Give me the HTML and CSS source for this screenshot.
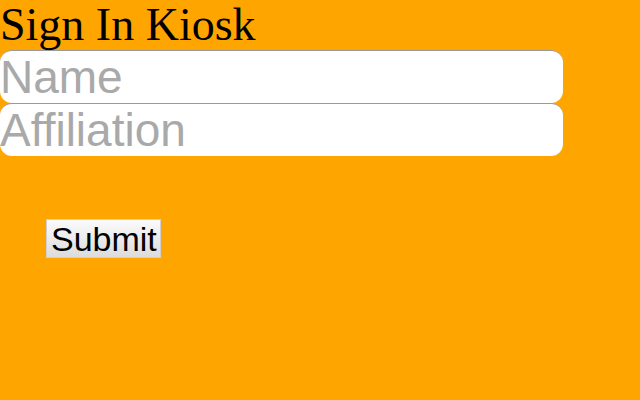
FILE: index.html
```html
<!DOCTYPE html>
<html lang="en">
<head>
  <meta charset="UTF-8" />
  <title>Sign In Kiosk</title>
  <link rel="stylesheet" href="styles.css">
</head>
<body>
  <div class="title">Sign In Kiosk</div>
  <form class="kiosk">
    <input type="text" name="name" placeholder="Name" />
    <input type="text" name="affiliation" placeholder="Affiliation" />
    <button type="button">Submit</button>
  </form>
</body>
</html>
```

FILE: styles.css
```css
body {
  margin: 0;
  background: #ffa500;
}
.title {
  font-family: "Liberation Serif", serif;
  font-size: 46px;
  line-height: 50px;
  color: #000;
}
.kiosk input {
  display: block;
  box-sizing: border-box;
  width: 563px;
  height: 53px;
  margin: 0;
  padding: 0;
  border: none;
  border-top: 1px solid #999;
  border-radius: 12px;
  background: #fff;
  font-family: "Liberation Sans", Arial, sans-serif;
  font-size: 46px;
  outline: none;
}
.kiosk input::placeholder {
  color: #a9a9a9;
}
.kiosk button {
  display: block;
  margin: 63px 0 0 46px;
  padding: 0 3px 0 4px;
  height: 39px;
  border: 1px solid #d0d0d0;
  border-radius: 0;
  background: linear-gradient(#fbfbfb, #dcdcdc);
  font-family: "Liberation Sans", Arial, sans-serif;
  font-size: 34px;
  color: #000;
}
```
